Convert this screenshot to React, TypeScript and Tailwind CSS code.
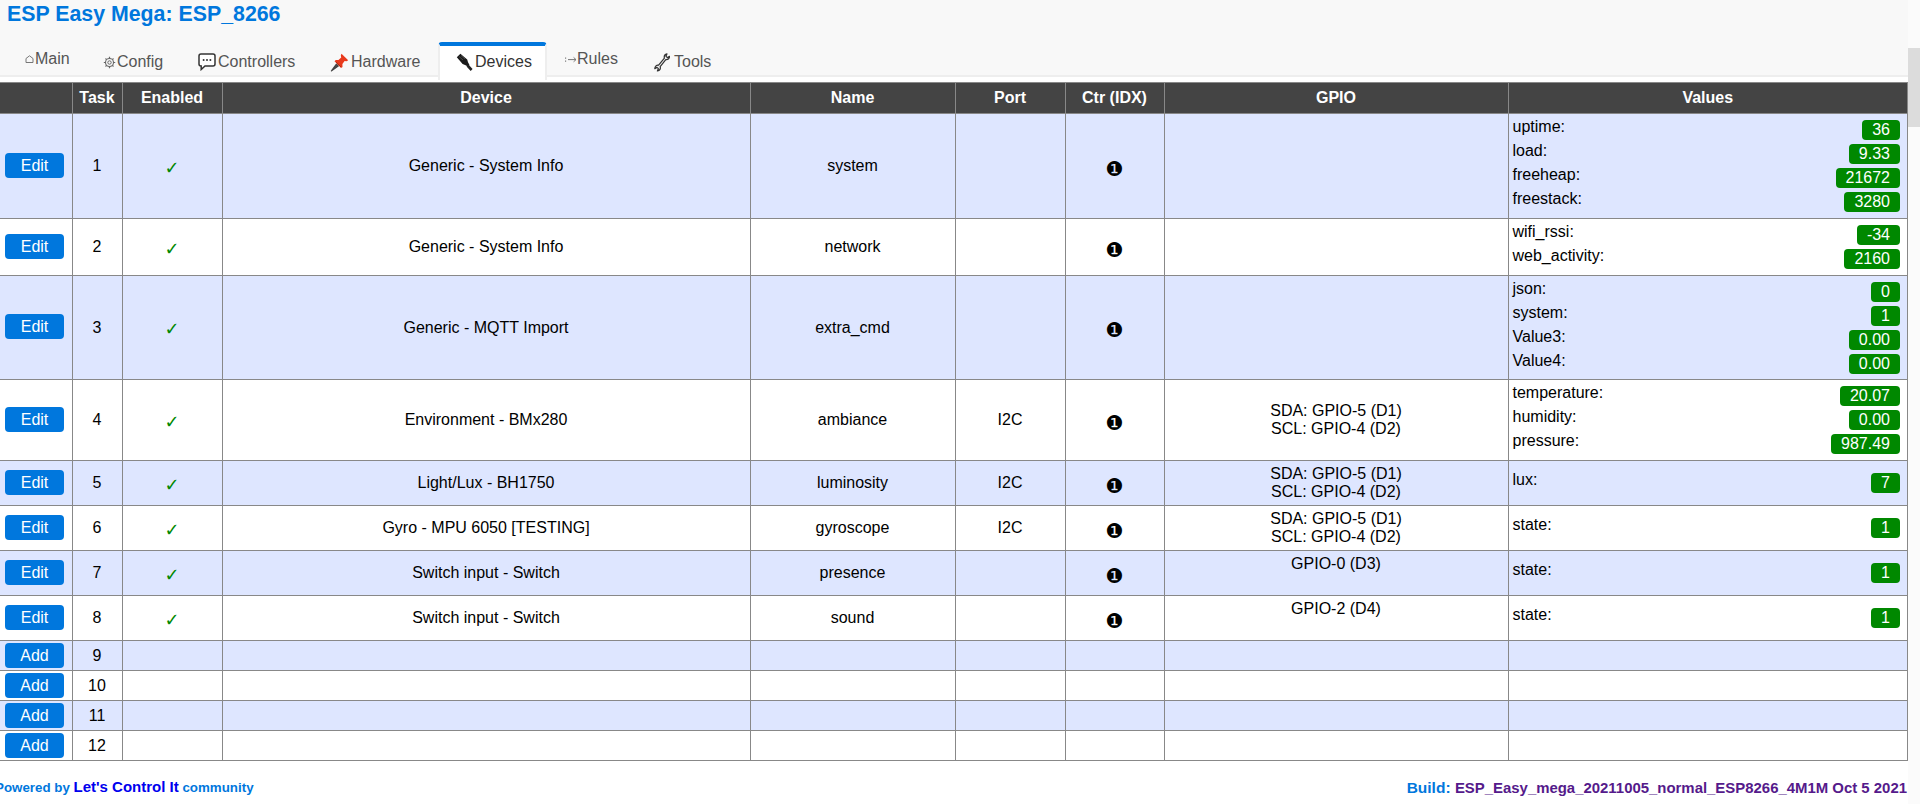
import type { ReactNode } from 'react';

const HomeIcon = () => (
  <svg width="9" height="8" viewBox="0 0 9 8" fill="none" stroke="#777" strokeWidth="1">
    <path d="M1 7.5V3.5L4.5 .8 8 3.5V7.5Z" />
  </svg>
);

const GearIcon = () => (
  <svg width="13" height="13" viewBox="0 0 13 13" fill="none" stroke="#666">
    <circle cx="6.5" cy="6.5" r="4" strokeWidth="1.1" />
    <circle cx="6.5" cy="6.5" r="1.7" strokeWidth="1" />
    <path d="M6.5 .8V2.5M6.5 10.5V12.2M.8 6.5H2.5M10.5 6.5H12.2M2.5 2.5L3.6 3.6M9.4 9.4L10.5 10.5M10.5 2.5L9.4 3.6M3.6 9.4L2.5 10.5" strokeWidth="1.2" />
  </svg>
);

const BubbleIcon = () => (
  <svg width="18" height="18" viewBox="0 0 18 18">
    <path d="M3 1H15Q17 1 17 3V11Q17 13 15 13H7L3.2 16.5V13H3Q1 13 1 11V3Q1 1 3 1Z" fill="#fff" stroke="#333" strokeWidth="1.5" />
    <circle cx="5.6" cy="7" r="1" fill="#333" />
    <circle cx="9" cy="7" r="1" fill="#333" />
    <circle cx="12.4" cy="7" r="1" fill="#333" />
  </svg>
);

const PinIcon = () => (
  <svg width="19" height="19" viewBox="0 0 19 19">
    <path d="M1.5 17.8L6.5 11.2 8.2 12.9Z" fill="#555" stroke="#444" strokeWidth="1.4" strokeLinejoin="round" />
    <path d="M11.5 .8L18.2 7.3 16.6 8.2 14.6 7.9 12.4 11 12.5 14 11 15 4.5 8.3 5.8 7 8.5 7.1 11.2 4.6 10.8 2.4Z" fill="#e8391c" />
    <path d="M6 9L11 14" stroke="#b32a12" strokeWidth="1" />
  </svg>
);

const PlugIcon = () => (
  <svg width="17" height="18" viewBox="0 0 17 18">
    <path d="M.8 4.2L4.4 .8 11.2 6.4 12 9.2 13.5 12 12 13.5 9 12 6.6 11Z" fill="#1a1a1a" />
    <path d="M11.5 12.5L15.6 17" stroke="#222" strokeWidth="2.6" />
    <path d="M3 3.5L7 7M5 2.5L9 6" stroke="#666" strokeWidth=".6" />
  </svg>
);

const ArrowIcon = () => (
  <svg width="12" height="9" viewBox="0 0 12 9" fill="none" stroke="#777">
    <path d="M.6 2.5V3.7M.6 5.5V6.7" strokeWidth="1.1" />
    <path d="M3 4.6H11M8.6 2.4L11 4.6 8.6 6.8" strokeWidth="1" />
  </svg>
);

const WrenchIcon = () => (
  <svg width="16" height="19" viewBox="0 0 16 19">
    <path d="M4.6 12.2L10.4 5.2C9.9 3.4 10.6 1.6 13 .9L12 3.4 13.4 4.6 15.6 3.4C15.4 5.8 13.8 7 11.8 6.6L6.2 13.6C6.8 15.6 6 17.4 3.4 18L4.4 15.6 3 14.4 .8 15.6C.8 13.2 2.6 11.8 4.6 12.2Z" fill="#eee" stroke="#333" strokeWidth="1.2" strokeLinejoin="round" />
  </svg>
);

const tabs: { label: string; icon: ReactNode; className: string; active?: boolean }[] = [
  { label: 'Main', icon: <HomeIcon />, className: 'w-[87px] pl-[25px] pb-[6px] gap-px' },
  { label: 'Config', icon: <GearIcon />, className: 'w-[94px] pl-[16px] gap-px' },
  { label: 'Controllers', icon: <BubbleIcon />, className: 'w-[132px] pl-[17px] gap-[2px]' },
  { label: 'Hardware', icon: <PinIcon />, className: 'w-[125px] pl-[17px] gap-[2px]' },
  { label: 'Devices', icon: <PlugIcon />, className: 'w-[109px] pl-[16px] gap-[2px]', active: true },
  { label: 'Rules', icon: <ArrowIcon />, className: 'w-[90px] pl-[18px] pb-[6px]' },
  { label: 'Tools', icon: <WrenchIcon />, className: 'w-[91px] pl-[17px] gap-[4px]' },
];

type Row = {
  task: number;
  device: string;
  name: string;
  port?: string;
  gpio?: string[];
  values: [string, string][];
};

const rows: Row[] = [
  { task: 1, device: 'Generic - System Info', name: 'system', values: [['uptime', '36'], ['load', '9.33'], ['freeheap', '21672'], ['freestack', '3280']] },
  { task: 2, device: 'Generic - System Info', name: 'network', values: [['wifi_rssi', '-34'], ['web_activity', '2160']] },
  { task: 3, device: 'Generic - MQTT Import', name: 'extra_cmd', values: [['json', '0'], ['system', '1'], ['Value3', '0.00'], ['Value4', '0.00']] },
  { task: 4, device: 'Environment - BMx280', name: 'ambiance', port: 'I2C', gpio: ['SDA: GPIO-5 (D1)', 'SCL: GPIO-4 (D2)'], values: [['temperature', '20.07'], ['humidity', '0.00'], ['pressure', '987.49']] },
  { task: 5, device: 'Light/Lux - BH1750', name: 'luminosity', port: 'I2C', gpio: ['SDA: GPIO-5 (D1)', 'SCL: GPIO-4 (D2)'], values: [['lux', '7']] },
  { task: 6, device: 'Gyro - MPU 6050 [TESTING]', name: 'gyroscope', port: 'I2C', gpio: ['SDA: GPIO-5 (D1)', 'SCL: GPIO-4 (D2)'], values: [['state', '1']] },
  { task: 7, device: 'Switch input - Switch', name: 'presence', gpio: ['GPIO-0 (D3)', '\u00a0'], values: [['state', '1']] },
  { task: 8, device: 'Switch input - Switch', name: 'sound', gpio: ['GPIO-2 (D4)', '\u00a0'], values: [['state', '1']] },
];

const headers = ['', 'Task', 'Enabled', 'Device', 'Name', 'Port', 'Ctr (IDX)', 'GPIO', 'Values'];
const td = 'border border-[#888] first:border-l-0 p-1 text-center align-middle';

function ActionButton({ label }: { label: string }) {
  return (
    <button className="block h-[25px] w-[59px] rounded-[4px] bg-[#0077dd] text-center text-[16px] leading-[25px] text-white">
      {label}
    </button>
  );
}

function DeviceRow({ row }: { row: Row }) {
  return (
    <tr className={row.task % 2 ? 'bg-[#dee6ff]' : 'bg-white'}>
      <td className="border border-[#888] border-l-0 pb-[3px] pl-[5px] pr-0 pt-px align-middle">
        <ActionButton label="Edit" />
      </td>
      <td className={td}>{row.task}</td>
      <td className={td}>
        <span className="relative top-[2px] font-['DejaVu_Sans',sans-serif] text-[18px] leading-none text-[#008800]">✓</span>
      </td>
      <td className={td}>{row.device}</td>
      <td className={td}>{row.name}</td>
      <td className={td}>{row.port}</td>
      <td className={td}>
        <span className="relative top-[3px] font-['DejaVu_Sans',sans-serif] text-[20px] leading-none">❶</span>
      </td>
      <td className={td}>
        {row.gpio?.map((line) => (
          <div key={line}>{line}</div>
        ))}
      </td>
      <td className={`${td} text-left ${row.task === 3 ? 'pb-[3px]' : ''}`}>
        {row.values.map(([label, value]) => (
          <div key={label} className="flex h-6 items-start justify-between pr-px">
            <span>{label}:</span>
            <span className="m-[2px] rounded-[4px] bg-[#008800] px-[10px] py-px text-white">{value}</span>
          </div>
        ))}
      </td>
    </tr>
  );
}

function AddRow({ task }: { task: number }) {
  return (
    <tr className={task % 2 ? 'bg-[#dee6ff]' : 'bg-white'}>
      <td className="border border-[#888] border-l-0 py-[2px] pl-[5px] pr-0 align-middle">
        <ActionButton label="Add" />
      </td>
      <td className={td}>{task}</td>
      {[0, 1, 2, 3, 4, 5, 6].map((i) => (
        <td key={i} className={td} />
      ))}
    </tr>
  );
}

export default function App() {
  return (
    <div className="flex h-[804px] overflow-hidden bg-white font-['Liberation_Sans',Arial,sans-serif] text-[16px] leading-[18px] text-black">
      <div className="min-w-0 flex-1">
        <header className="h-[77px] border-b-2 border-[#eeeeee] bg-[#f8f8f8]">
          <h1 className="pl-[7px] pt-[2px] text-[21.33px] font-bold leading-[24px] text-[#0077dd]">ESP Easy Mega: ESP_8266</h1>
          <nav className="mt-[16px] flex">
            {tabs.map((tab) => (
              <div
                key={tab.label}
                className={`flex items-center ${tab.className} ${
                  tab.active
                    ? 'h-[38px] rounded-t-[4px] border-x-2 border-t-[4px] border-x-[#eeeeee] border-t-[#0077dd] bg-white pb-[3px] text-[#333]'
                    : 'h-[33px] pt-[7px] text-[#555]'
                }`}
              >
                {tab.icon}
                <span>{tab.label}</span>
              </div>
            ))}
          </nav>
        </header>

        <table className="mt-[5px] w-full table-fixed border-collapse">
          <colgroup>
            <col className="w-[72px]" />
            <col className="w-[50px]" />
            <col className="w-[100px]" />
            <col className="w-[528px]" />
            <col className="w-[205px]" />
            <col className="w-[110px]" />
            <col className="w-[99px]" />
            <col className="w-[344px]" />
            <col />
          </colgroup>
          <thead>
            <tr className="bg-[#444444] text-white">
              {headers.map((h, i) => (
                <th key={i} className="border border-[#888] first:border-l-0 p-[6px] font-bold">
                  {h}
                </th>
              ))}
            </tr>
          </thead>
          <tbody>
            {rows.map((row) => (
              <DeviceRow key={row.task} row={row} />
            ))}
            {[9, 10, 11, 12].map((task) => (
              <AddRow key={task} task={task} />
            ))}
          </tbody>
        </table>

        <footer className="mt-[17px] flex items-center justify-between font-bold leading-[18px] text-[#0077dd]">
          <p className="-ml-[5px] text-[13.33px]">
            Powered by <span className="text-[15px] text-[#0000ee]">Let's Control It</span> community
          </p>
          <p className="pr-px text-[15.5px]">
            Build: <span className="text-[14.93px] text-[#551a8b]">ESP_Easy_mega_20211005_normal_ESP8266_4M1M Oct 5 2021</span>
          </p>
        </footer>
      </div>

      <aside className="w-3 shrink-0 bg-[#fbfbfb] pt-[48px]">
        <div className="h-[79px] bg-[#dcdcdc]" />
      </aside>
    </div>
  );
}
